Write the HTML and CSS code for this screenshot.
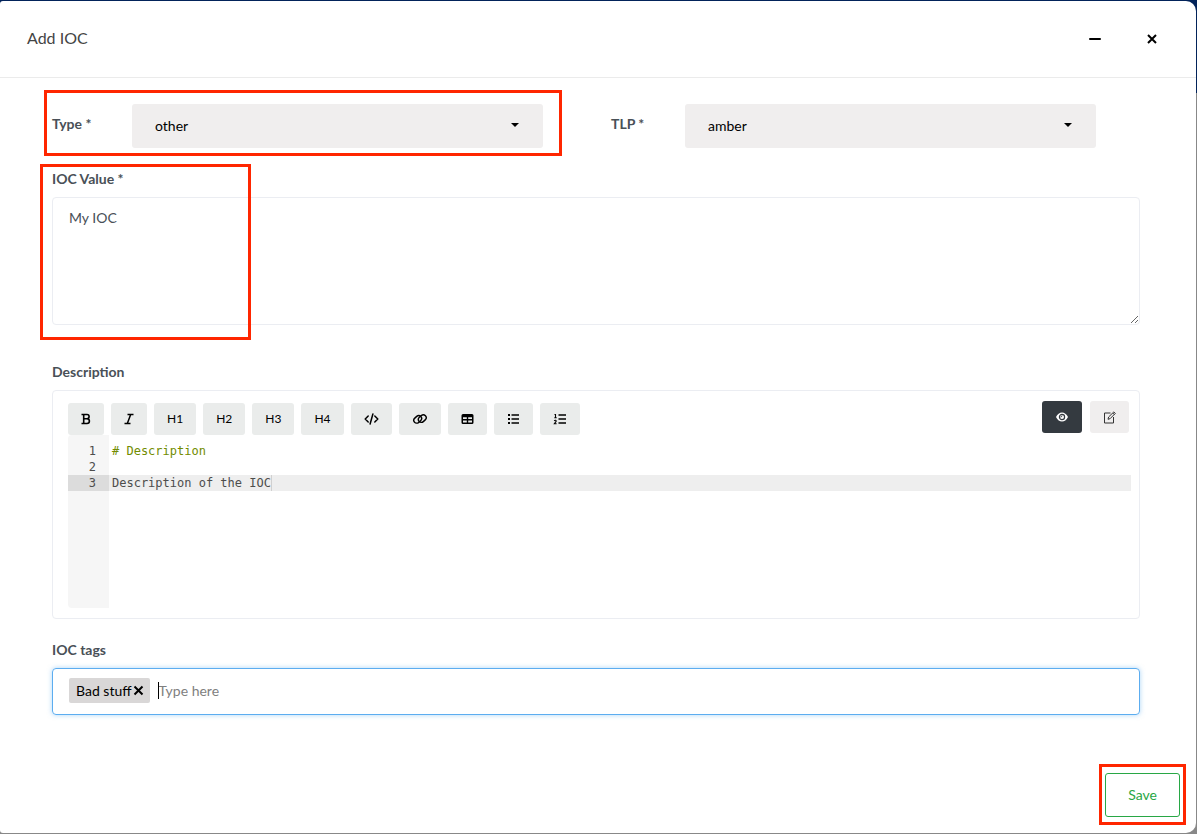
FILE: index.html
```html
<!DOCTYPE html>
<html lang="en">
<head>
    <meta charset="UTF-8">
    <meta name="viewport" content="width=device-width, initial-scale=1.0">
    <title>Add IOC</title>
    <link rel="stylesheet" href="styles.css">
</head>
<body>
    <div class="modal" role="dialog" aria-labelledby="modal-title">
        <header class="modal-header">
            <h1 id="modal-title">Add IOC</h1>
            <div class="window-buttons">
                <button type="button" aria-label="Minimize">
                    <svg width="12" height="12" viewBox="0 0 12 12"><path d="M1 6h10" stroke="currentColor" stroke-width="2" stroke-linecap="round"/></svg>
                </button>
                <button type="button" aria-label="Close">
                    <svg width="12" height="12" viewBox="0 0 12 12"><path d="M2 2l8 8M10 2l-8 8" stroke="currentColor" stroke-width="2"/></svg>
                </button>
            </div>
        </header>

        <form class="modal-body">
            <div class="form-row">
                <div class="inline-field type-field marked">
                    <label for="ioc-type">Type *</label>
                    <span class="select-wrap">
                        <select id="ioc-type">
                            <option>other</option>
                        </select>
                    </span>
                </div>
                <div class="inline-field tlp-field">
                    <label for="ioc-tlp">TLP *</label>
                    <span class="select-wrap">
                        <select id="ioc-tlp">
                            <option>amber</option>
                        </select>
                    </span>
                </div>
            </div>

            <div class="form-group value-group marked">
                <label for="ioc-value">IOC Value *</label>
                <textarea id="ioc-value">My IOC</textarea>
            </div>

            <div class="form-group description-group">
                <label id="description-label">Description</label>
                <div class="editor-card">
                    <div class="editor-bar">
                        <div class="toolbar">
                            <button type="button" aria-label="Bold">
                                <svg width="10" height="12" viewBox="0 0 10 12"><path d="M.5 1.500H6a2.100 2.100 0 0 1 0 4.200H3M6 5.700a2.400 2.400 0 0 1 0 4.800H.5M2.700 1.500v9" fill="none" stroke="currentColor" stroke-width="1.600"/></svg>
                            </button>
                            <button type="button" aria-label="Italic">
                                <svg width="10" height="12" viewBox="0 0 10 12"><path d="M3.500 1.500h6M.5 10.500h6M6.700 1.500l-3.400 9" fill="none" stroke="currentColor" stroke-width="1.500"/></svg>
                            </button>
                            <button type="button">H1</button>
                            <button type="button">H2</button>
                            <button type="button">H3</button>
                            <button type="button">H4</button>
                            <button type="button" aria-label="Code">
                                <svg width="15" height="12" viewBox="0 0 15 12"><path d="M4.200 3L1.200 6l3 3M10.800 3l3 3-3 3M8.900 1L6.100 11" fill="none" stroke="currentColor" stroke-width="1.500" stroke-linecap="round" stroke-linejoin="round"/></svg>
                            </button>
                            <button type="button" aria-label="Link">
                                <svg width="16" height="12" viewBox="0 0 16 12"><g fill="none" stroke="currentColor" stroke-width="1.400"><rect x="1.500" y="3.500" width="8.400" height="5.800" rx="2.900" transform="rotate(-42 5.700 6.400)"/><rect x="6.100" y="2.700" width="8.400" height="5.800" rx="2.900" transform="rotate(-42 10.300 5.600)"/></g></svg>
                            </button>
                            <button type="button" aria-label="Table">
                                <svg width="13" height="12" viewBox="0 0 13 12"><path fill="currentColor" fill-rule="evenodd" d="M2 1h9a1.500 1.500 0 0 1 1.500 1.500v7a1.500 1.500 0 0 1-1.500 1.500H2A1.500 1.500 0 0 1 .5 9.500v-7A1.500 1.500 0 0 1 2 1zM2 4.200v1.900h3.800V4.200zM7.200 4.200v1.900H11V4.200zM2 7.500v2h3.800v-2zM7.200 7.500v2H11v-2z"/></svg>
                            </button>
                            <button type="button" aria-label="Bulleted list">
                                <svg width="13" height="12" viewBox="0 0 13 12"><path d="M4.500 2h7.500M4.500 6h7.500M4.500 10h7.500" stroke="currentColor" stroke-width="1.500"/><path d="M1 2h2M1 6h2M1 10h2" stroke="currentColor" stroke-width="2"/></svg>
                            </button>
                            <button type="button" aria-label="Numbered list">
                                <svg width="14" height="12" viewBox="0 0 14 12"><path d="M5.500 2H13M5.500 6H13M5.500 10H13" stroke="currentColor" stroke-width="1.500"/><path d="M1.500 1h1v3M1.300 4.300h2.400M1.200 7.300c.8-1 2.300-.5 1.900.6L1.400 10.200h2.200" transform="translate(0 .5)" fill="none" stroke="currentColor" stroke-width="1.100"/></svg>
                            </button>
                        </div>
                        <div class="view-buttons">
                            <button type="button" class="preview" aria-label="Preview">
                                <svg width="14" height="12" viewBox="0 0 14 12"><path d="M1 6c1.500-3 3.600-4.600 6-4.600S11.500 3 13 6c-1.500 3-3.600 4.600-6 4.600S2.500 9 1 6z" fill="currentColor"/><circle cx="7" cy="6" r="2.600" fill="none" stroke="#343a40" stroke-width="1.200"/><path d="M5.500 6A1.500 1.500 0 0 0 7 4.500" fill="none" stroke="#343a40"/></svg>
                            </button>
                            <button type="button" class="edit" aria-label="Edit">
                                <svg width="13" height="13" viewBox="0 0 13 13"><path d="M7.500 2H1.500v10h9V6M5 8.300l.6-2.300L10.800.9l1.500 1.500L7.200 7.600zM9.800 2l1.500 1.500" fill="none" stroke="currentColor"/></svg>
                            </button>
                        </div>
                    </div>
                    <div class="editor">
                        <div class="gutter">
                            <div class="line">1</div>
                            <div class="line">2</div>
                            <div class="line active">3</div>
                        </div>
                        <div class="code" contenteditable="true" role="textbox" aria-multiline="true" aria-labelledby="description-label" spellcheck="false">
                            <div class="line heading"># Description</div>
                            <div class="line"></div>
                            <div class="line active"><span class="cursor">Description of the IOC</span></div>
                        </div>
                    </div>
                </div>
            </div>

            <div class="form-group tags-group">
                <label for="ioc-tags">IOC tags</label>
                <div class="tags-input">
                    <span class="tag">Bad stuff<button type="button" aria-label="Remove tag"><svg width="11" height="11" viewBox="0 0 11 11"><path d="M1.500 1.500l8 8M9.500 1.500l-8 8" stroke="currentColor" stroke-width="2"/></svg></button></span>
                    <input type="text" id="ioc-tags" placeholder="Type here">
                </div>
            </div>

            <div class="form-actions">
                <div class="save-wrap marked">
                    <button type="submit" class="save">Save</button>
                </div>
            </div>
        </form>
    </div>
</body>
</html>
```

FILE: styles.css
```css
*, *::before, *::after {
    box-sizing: border-box;
}
body {
    display: flex;
    min-height: 100vh;
    margin: 0;
    padding: 1px 1px 1px 0;
    font-family: Lato, "Open Sans", sans-serif;
    font-size: 14px;
    line-height: 20px;
    color: #575962;
    background: linear-gradient(#02235a 93px, #888 93px);
}
button, select, input, textarea {
    font: inherit;
}
button {
    display: flex;
    align-items: center;
    justify-content: center;
    padding: 0;
    border: none;
    border-radius: 3px;
    color: #000;
    background: none;
    cursor: pointer;
}
svg {
    display: block;
}
label {
    font-weight: 700;
    color: #495057;
}
.modal {
    flex: 1;
    min-width: 0;
    border-radius: 3px 10px 10px 3px;
    background: #fff;
}
.modal-header {
    display: flex;
    align-items: center;
    justify-content: space-between;
    height: 77px;
    padding: 0 38px 0 27px;
    border-bottom: 1px solid #ebebeb;
}
.modal-header h1 {
    margin: 0;
    padding-bottom: 2px;
    font-size: 16px;
    font-weight: 400;
    color: #444;
}
.window-buttons {
    display: flex;
    gap: 45px;
}
.modal-body {
    padding: 26px 16px 16px 52px;
}

/* fields */
.form-row {
    display: flex;
    gap: 68px;
    margin-right: 84px;
}
.inline-field {
    display: flex;
}
.inline-field label {
    flex: none;
    padding-top: 10px;
}
.type-field {
    flex: 1 1 80px;
}
.type-field label {
    width: 80px;
}
.tlp-field {
    flex: 1 1 74px;
}
.tlp-field label {
    width: 74px;
}
.select-wrap {
    position: relative;
    flex: 1;
}
.select-wrap::after {
    content: "";
    position: absolute;
    top: 19px;
    right: 24px;
    border: 4px solid transparent;
    border-top-color: #000;
    border-bottom: none;
    pointer-events: none;
}
select {
    display: block;
    width: 100%;
    height: 44px;
    padding: 0 40px 0 23px;
    border: none;
    border-radius: 3px;
    color: #000;
    background: #f0eeee;
    appearance: none;
}
.form-group {
    margin: 21px 40px 0 0;
}
.form-group > label {
    display: block;
    margin-bottom: 8px;
}
textarea {
    display: block;
    width: 100%;
    height: 128px;
    padding: 10px 16px;
    border: 1px solid #ebedf2;
    border-radius: 4px;
    color: #495057;
    resize: vertical;
}
.description-group {
    margin-top: 37px;
}

/* markdown editor */
.editor-card {
    padding: 10px 8px 10px 15px;
    border: 1px solid #ebedf2;
    border-radius: 4px;
}
.editor-bar {
    display: flex;
    justify-content: space-between;
    height: 34px;
}
.toolbar {
    display: flex;
    align-items: flex-end;
    gap: 7px;
}
.toolbar button {
    height: 32px;
    padding: 0 13px;
    font-size: 12px;
    background: #eaeceb;
}
.view-buttons {
    display: flex;
    gap: 8px;
    margin-right: 2px;
}
.view-buttons button {
    height: 32px;
    padding: 0 13px;
}
.view-buttons .preview {
    color: #fff;
    background: #343a40;
}
.view-buttons .edit {
    color: #333;
    background: #f0eeee;
}
.editor {
    display: flex;
    height: 173px;
    font: 12px/16px "DejaVu Sans Mono", monospace;
    color: #4d4d4c;
}
.gutter {
    width: 41px;
    padding-top: 8px;
    border-radius: 4px 0 0 4px;
    text-align: right;
    background: #f6f6f6;
}
.gutter .line {
    padding-right: 13px;
}
.gutter .active {
    background: #dcdcdc;
}
.code {
    flex: 1;
    padding-top: 8px;
    outline: none;
}
.code .line {
    padding-left: 3px;
}
.code .active {
    background: #eee;
}
.code .heading {
    color: #718c00;
}
.line {
    height: 16px;
}
.cursor {
    display: inline-block;
    height: 16px;
    border-right: 1px solid #d0d0d0;
}

/* tags */
.tags-input {
    display: flex;
    align-items: center;
    gap: 8px;
    height: 47px;
    padding: 0 16px 2px;
    border: 1px solid #5cadf0;
    border-radius: 4px;
    box-shadow: 0 0 5px rgba(92, 173, 240, 0.5);
}
.tag {
    display: flex;
    align-items: center;
    gap: 1px;
    height: 25px;
    padding: 0 6px 0 7px;
    border-radius: 2px;
    color: #000;
    background: #d9d7d7;
}
.tags-input input {
    flex: 1;
    min-width: 0;
    height: 17px;
    padding: 0;
    border: none;
    border-left: 1px solid #000;
    outline: none;
}
.tags-input input::placeholder {
    color: #808080;
}

/* footer */
.form-actions {
    display: flex;
    justify-content: flex-end;
    margin-top: 58px;
}
.save {
    height: 44px;
    padding: 0 22px;
    border: 1px solid #28a745;
    color: #28a745;
}

/* red highlight frames */
.marked {
    position: relative;
}
.marked::after {
    content: "";
    position: absolute;
    border: 3px solid #ff2600;
    pointer-events: none;
}
.type-field::after {
    inset: -14px -19px -8px -8px;
}
.value-group::after {
    top: -5px;
    bottom: -15px;
    left: -12px;
    width: 211px;
}
.save-wrap::after {
    inset: -9px -6px -8px;
}
```
